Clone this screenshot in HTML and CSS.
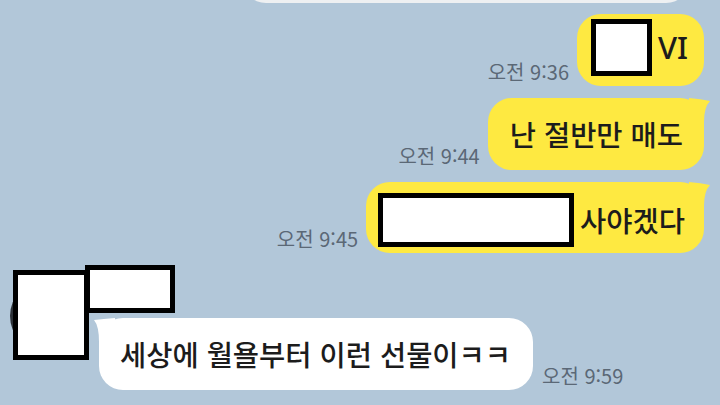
FILE: index.html
```html
<!DOCTYPE html>
<html lang="ko">

<head>
    <meta charset="UTF-8">
    <meta name="viewport" content="width=device-width, initial-scale=1.0">
    <title>채팅</title>
    <link rel="stylesheet" href="styles.css">
</head>

<body>
    <div class="chat">
        <div class="prevBubble"></div>

        <div class="row mine first">
            <span class="time">오전 9:36</span>
            <div class="bubble yellow b1">
                <span class="cover c1"></span>
                <span class="vi">VI</span>
            </div>
        </div>

        <div class="row mine">
            <span class="time">오전 9:44</span>
            <div class="bubble yellow tailR b2">난 절반만 매도</div>
        </div>

        <div class="row mine">
            <span class="time">오전 9:45</span>
            <div class="bubble yellow tailR b3">
                <span class="cover c3"></span>
                <span>사야겠다</span>
            </div>
        </div>

        <div class="incoming">
            <div class="avatarWrap">
                <div class="avatar"></div>
                <span class="cover avatarCover"></span>
            </div>
            <div class="msgCol">
                <span class="cover nameCover"></span>
                <div class="row theirs">
                    <div class="bubble white tailL b4">세상에 월욜부터 이런 선물이ㅋㅋ</div>
                    <span class="time">오전 9:59</span>
                </div>
            </div>
        </div>
    </div>
</body>

</html>
```

FILE: styles.css
```css
* {
    margin: 0;
    box-sizing: border-box;
}

html,
body {
    width: 720px;
    height: 405px;
    overflow: hidden;
}

body {
    background: #b2c7d9;
    font-family: "Noto Sans CJK KR", "Noto Sans", sans-serif;
    color: #1c1c1c;
}

.chat {
    display: flex;
    flex-direction: column;
    padding-right: 16px;
}

.prevBubble {
    width: 448px;
    height: 30px;
    margin: -27px 0 0 242px;
    background: #eef0f2;
    border-radius: 0 0 24px 24px;
}

.row {
    display: flex;
    align-items: flex-end;
}

.mine {
    justify-content: flex-end;
    margin-top: 12px;
}

.mine.first {
    margin-top: 11px;
}

.time {
    font-size: 20px;
    line-height: 1;
    color: #5b6876;
    margin-bottom: 4px;
    white-space: nowrap;
}

.mine .time {
    margin-right: 8px;
}

.theirs .time {
    margin-left: 9px;
}

.bubble {
    position: relative;
    display: flex;
    align-items: center;
    height: 72px;
    border-radius: 24px;
    font-size: 28.5px;
    font-weight: 500;
    line-height: 1;
    white-space: nowrap;
}

.yellow {
    background: #fee941;
}

.white {
    background: #fff;
}

.tailR::after,
.tailL::before {
    content: "";
    position: absolute;
    top: 0;
    width: 22px;
    height: 24px;
    background: inherit;
}

.tailR::after {
    right: -7px;
    clip-path: path("M0 0 Q12 1 21 3 Q15 9 15 24 L0 24 Z");
}

.tailL::before {
    left: -6px;
    clip-path: path("M22 0 Q10 1 1 2 Q6 8 6 24 L22 24 Z");
}

.cover {
    display: block;
    background: #fff;
    border: 5px solid #000;
}

.b1 {
    width: 127px;
    padding: 5px 0 10px 14px;
}

.c1 {
    width: 61px;
    height: 57px;
}

.vi {
    font-family: "Noto Sans", sans-serif;
    font-size: 31px;
    margin-left: 6px;
}

.b2 {
    padding: 0 21px 0 22px;
    height: 72px;
}

.b3 {
    height: 71px;
    padding: 5px 19px 0 12px;
}

.c3 {
    width: 196px;
    height: 54px;
    margin-right: 6px;
}

.incoming {
    display: flex;
    padding-left: 10px;
    margin-top: 12px;
}

.avatarWrap {
    position: relative;
    width: 72px;
    height: 72px;
    margin-top: 15px;
}

.avatar {
    width: 72px;
    height: 72px;
    border-radius: 50%;
    background: #2c3138;
}

.avatarCover {
    position: absolute;
    left: 3px;
    top: -10px;
    width: 76px;
    height: 90px;
}

.msgCol {
    margin-left: 17px;
}

.nameCover {
    width: 90px;
    height: 48px;
    margin-left: -14px;
}

.theirs {
    margin-top: 5px;
}

.b4 {
    padding: 0 22px 0 21px;
}
```
